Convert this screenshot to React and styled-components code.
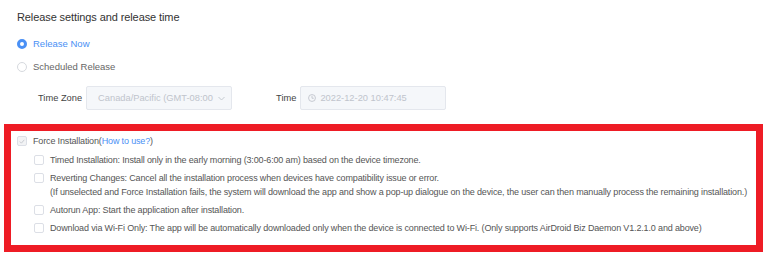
import React from "react";
import styled, { createGlobalStyle } from "styled-components";

const Global = createGlobalStyle`
  html, body { margin: 0; padding: 0; background: #fff; }
  body { font-family: "Liberation Sans", Arial, sans-serif; color: #555; }
`;

const Page = styled.div`
  width: 768px;
  height: 256px;
  overflow: hidden;
  padding: 8px 0 0 17px;
  box-sizing: border-box;
`;

const Title = styled.div`
  font-size: 11px;
  letter-spacing: -0.1px;
  color: #333;
  line-height: 18px;
  height: 18px;
  margin-bottom: 6px;
`;

const RadioRow = styled.label`
  display: flex;
  align-items: center;
  gap: 6px;
  height: 23px;
  font-size: 9.5px;
  color: ${(p) => (p.$checked ? "#4a90f5" : "#666")};
`;

const RadioDot = styled.span`
  width: 10px;
  height: 10px;
  border-radius: 50%;
  box-sizing: border-box;
  border: ${(p) => (p.$checked ? "3px solid #4a90f5" : "1px solid #d6d9de")};
  background: #fff;
`;

const Fields = styled.div`
  display: flex;
  align-items: center;
  padding-left: 21px;
  margin-top: 8px;
  font-size: 9.3px;
  color: #444;
`;

const FieldLabel = styled.span`
  margin-right: 4px;
`;

const Box = styled.div`
  width: 146px;
  height: 24px;
  box-sizing: border-box;
  border: 1px solid #e4e7ed;
  border-radius: 2px;
  background: #f5f7fa;
  color: #c0c4cc;
  display: flex;
  align-items: center;
  padding: 0 6px 0 ${(p) => p.$pl || 8}px;
  gap: 4px;
  margin-right: ${(p) => p.$mr || 0}px;
`;

const Grow = styled.span`
  flex: 1;
  white-space: nowrap;
  overflow: hidden;
`;

const RedFrame = styled.div`
  margin: 14px 0 0 -13px;
  width: 759px;
  height: 128px;
  box-sizing: border-box;
  border: 7px solid #ee1c25;
  padding: 3px 0 0 6px;
  font-size: 9px;
  letter-spacing: -0.15px;
  color: #555;
`;

const CheckRow = styled.div`
  display: flex;
  align-items: flex-start;
  gap: 6px;
  padding-left: ${(p) => p.$indent || 0}px;
  margin-bottom: ${(p) => p.$mb || 0}px;
  line-height: 14px;
  white-space: nowrap;
`;

const CheckBox = styled.span`
  flex: none;
  width: 10px;
  height: 10px;
  margin-top: 2px;
  box-sizing: border-box;
  border: 1px solid #dcdfe6;
  border-radius: 2px;
  background: ${(p) => (p.$disabled ? "#f2f3f5" : "#fff")};
  display: flex;
  align-items: center;
  justify-content: center;
`;

const Link = styled.span`
  color: #4a90f5;
`;

const Stack = styled.div`
  display: flex;
  flex-direction: column;
`;

function Check({ disabled }) {
  return (
    <CheckBox $disabled={disabled}>
      {disabled && (
        <svg width="6" height="5" viewBox="0 0 7 6">
          <path d="M0.8 3 L2.8 5 L6.2 1" fill="none" stroke="#c8cbd0" strokeWidth="1.2" />
        </svg>
      )}
    </CheckBox>
  );
}

export default function App() {
  return (
    <Page>
      <Global />
      <Title>Release settings and release time</Title>
      <RadioRow $checked>
        <RadioDot $checked />
        Release Now
      </RadioRow>
      <RadioRow>
        <RadioDot />
        Scheduled Release
      </RadioRow>
      <Fields>
        <FieldLabel>Time Zone</FieldLabel>
        <Box $mr={44} $pl={11}>
          <Grow>Canada/Pacific (GMT-08:00</Grow>
          <svg width="7" height="5" viewBox="0 0 7 5">
            <path d="M0.5 1 L3.5 4 L6.5 1" fill="none" stroke="#c0c4cc" strokeWidth="0.9" />
          </svg>
        </Box>
        <FieldLabel>Time</FieldLabel>
        <Box $pl={7}>
          <svg width="8" height="8" viewBox="0 0 10 10">
            <circle cx="5" cy="5" r="4.3" fill="none" stroke="#c0c4cc" strokeWidth="1.1" />
            <path d="M5 2.4 V5.3 H7.2" fill="none" stroke="#c0c4cc" strokeWidth="1.1" />
          </svg>
          <Grow>2022-12-20 10:47:45</Grow>
        </Box>
      </Fields>
      <RedFrame>
        <CheckRow $mb={5}>
          <Check disabled />
          <span>
            Force Installation(<Link>How to use?</Link>)
          </span>
        </CheckRow>
        <CheckRow $indent={17} $mb={4}>
          <Check />
          <span>Timed Installation: Install only in the early morning (3:00-6:00 am) based on the device timezone.</span>
        </CheckRow>
        <CheckRow $indent={17} $mb={4}>
          <Check />
          <Stack>
            <span>Reverting Changes: Cancel all the installation process when devices have compatibility issue or error.</span>
            <span>
              (If unselected and Force Installation fails, the system will download the app and show a pop-up dialogue on the device, the user can then manually process the remaining installation.)
            </span>
          </Stack>
        </CheckRow>
        <CheckRow $indent={17} $mb={4}>
          <Check />
          <span>Autorun App: Start the application after installation.</span>
        </CheckRow>
        <CheckRow $indent={17}>
          <Check />
          <span>
            Download via Wi-Fi Only: The app will be automatically downloaded only when the device is connected to Wi-Fi. (Only supports AirDroid Biz Daemon V1.2.1.0 and above)
          </span>
        </CheckRow>
      </RedFrame>
    </Page>
  );
}
